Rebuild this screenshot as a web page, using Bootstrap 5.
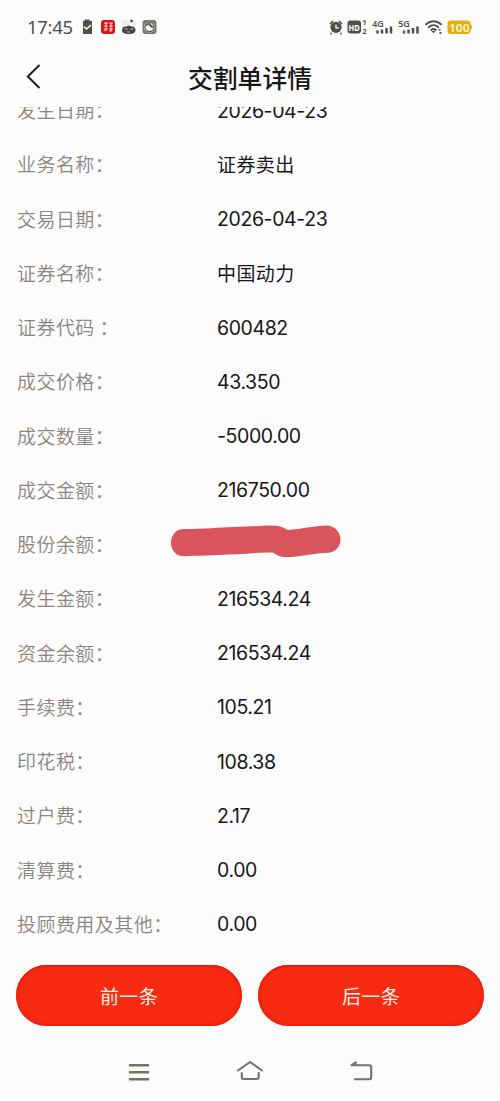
<!DOCTYPE html>
<html lang="zh-CN">
<head>
<meta charset="utf-8">
<meta name="viewport" content="width=device-width, initial-scale=1">
<title>交割单详情</title>
<link rel="stylesheet" href="https://cdn.jsdelivr.net/npm/bootstrap@5.3.0/dist/css/bootstrap.min.css">
<style>
body{background:#fcfcfc;font-family:Inter,"Noto Sans CJK SC",sans-serif;color:#17171a}
.screen{height:1101px}
.status{height:54px;padding:0 28px 0 27px;color:#514e48}
.clock{font:400 18.5px/54px "Noto Sans",sans-serif;letter-spacing:-.3px;width:52px}
.status svg,.navkeys svg,.title-bar svg{display:block}
.title-bar{height:53px}
.title-bar h1{font:500 24.8px/46px "Noto Sans CJK SC",sans-serif}
.back{left:25px;top:9px}
.details{height:845px}
.details dl{margin-top:-23.5px}
.line{height:54.25px;padding-left:17px}
.line dt{width:200px;margin-top:-1px;font:350 19px/30px "Noto Sans CJK SC",sans-serif;letter-spacing:.45px;color:#8a8581;white-space:pre}
.line dd{font-size:19.5px;line-height:30px;letter-spacing:-.4px}
.line dd.han{font-family:"Noto Sans CJK SC",sans-serif;font-size:19px;letter-spacing:.4px;margin-top:-1px}
.scribble{margin-left:-47px;margin-top:-8px}
.actions{padding:13px 16px 0;height:74px;gap:16px}
.btn-pill{height:61px;--bs-btn-color:#fff3e8;--bs-btn-bg:#f62b12;--bs-btn-hover-bg:#e9220c;--bs-btn-hover-color:#fff;border:0;box-shadow:inset 0 0 5px #e8130a,inset 0 1px 1px #d71c10;font:400 19px/61px "Noto Sans CJK SC",sans-serif;letter-spacing:.4px}
.navkeys{height:75px;padding:0 125px}
</style>
</head>
<body>
<main class="screen d-flex flex-column overflow-hidden">
  <header class="status d-flex align-items-center">
    <span class="clock">17:45</span>
    <svg class="ms-1" width="80" height="20" viewBox="83 17 80 20" aria-hidden="true">
      <path d="M82 21h2.500v-1.500h5V21H92v13H82z" fill="#514e48"/><path d="m84 26.500 2.500 2.500 4.500-4" fill="none" stroke="#fff" stroke-width="1.600"/>
      <rect x="101" y="20" width="14" height="14" rx="3" fill="#d9141b"/>
      <path d="M104 23.200h4M106 22v9M104 26h4M104 29h4M109 23h4M109 26h4M109 29h4M111 23v8M109 31h3M104 31l1-1" stroke="#ffe6dc" stroke-width=".9" fill="none"/>
      <rect x="122" y="19.500" width="14" height="14" rx="3" fill="#eeeeed"/><circle cx="131.500" cy="21" r="1.300" fill="#46433c"/>
      <path d="M122 30c0-2 2-4 4.500-3.500 2-1 3-1 5 0 2.500 0 4 1.500 4 3.500 0 3-3 4-6.700 4s-6.800-1-6.800-4z" fill="#46433c"/><path d="M125 29.500l1.500-1 1 1.500m3-.5 1.500-1 1 1.500M127 32h3" stroke="#bdbab2" fill="none"/>
      <rect x="142.500" y="20" width="14" height="14" rx="3" fill="#77746e"/><circle cx="149.500" cy="27" r="5.600" fill="#f4f4f2"/><circle cx="149.500" cy="27" r="4.600" fill="none" stroke="#555149" stroke-width="1.200"/>
      <path d="M146 26c1-2.500 3-2.500 4-.5s2 2 3.500.5M148.500 23l4.500 4.500" fill="none" stroke="#555149" stroke-width="1.200"/>
    </svg>
    <svg class="ms-auto" width="144" height="24" viewBox="328 15 144 24" aria-hidden="true">
      <g fill="none" stroke="#514e48">
        <circle cx="336" cy="27.300" r="5.600" fill="#514e48" stroke="none"/><path d="m330 24 3-3m9 3-3-3m-7.500 12-1 1.200m10-1.200 1 1.200" stroke-width="1.500"/><path d="M336 24.500v3.300h3" stroke="#fff" stroke-width="1.300"/>
        <g stroke-width="2.500"><path d="M377.500 30.500v3M382 29.500v4M386.500 28v5.500M391 26.500v7M404 30.500v3M408.500 29.500v4M413 28v5.500M417.500 26.500v7"/></g>
        <g stroke-width="1.900" stroke-linecap="round"><path d="M426 24.200c4.500-4 10.500-4 15 0M428.700 27.200c3-2.600 6.600-2.600 9.600 0M431.200 30c1.500-1.200 3.200-1.200 4.600 0"/></g>
      </g>
      <path d="m431.500 31 2 2.300 2-2.300zM438.500 29h2v1.500h-2zm1 3h2v1.800h-2z" fill="#514e48"/>
      <rect x="347.500" y="20.500" width="13.500" height="13" rx="3" fill="#514e48"/>
      <g font-family="Noto Sans" font-weight="700" fill="#514e48"><text x="348.600" y="30.500" font-size="9" textLength="11.300" lengthAdjust="spacingAndGlyphs" fill="#fff">HD</text><text x="362.500" y="25.400" font-size="7">1</text><text x="362.500" y="34" font-size="7">2</text><text x="372.300" y="26.600" font-size="9.500" font-weight="600" textLength="11.500" lengthAdjust="spacingAndGlyphs">4G</text><text x="398.300" y="26.600" font-size="9.500" font-weight="600" textLength="11.500" lengthAdjust="spacingAndGlyphs">5G</text></g>
      <path d="M451 20.500h16q3.500 0 3.500 3v1q1.700.3 1.700 2.700t-1.700 2.600v1.200q0 3-3.500 3h-16q-3.500 0-3.500-3v-7.500q0-3 3.500-3z" fill="#e6ae13"/>
      <text x="449" y="31.600" font-family="Noto Sans" font-size="11.500" font-weight="600" fill="#fff6cf" textLength="20.500" lengthAdjust="spacingAndGlyphs">100</text>
    </svg>
  </header>
  <nav class="title-bar position-relative text-center flex-shrink-0">
    <svg class="back position-absolute" width="18" height="28" viewBox="0 0 18 28"><path d="M14.500 2 2.800 13.500 14.500 25" fill="none" stroke="#17171a" stroke-width="1.900"/></svg>
    <h1 class="m-0">交割单详情</h1>
  </nav>
  <section class="details overflow-hidden flex-shrink-0">
    <dl class="mb-0">
      <div class="line d-flex align-items-center"><dt>发生日期：</dt><dd class="mb-0">2026-04-23</dd></div>
      <div class="line d-flex align-items-center"><dt>业务名称：</dt><dd class="mb-0 han">证券卖出</dd></div>
      <div class="line d-flex align-items-center"><dt>交易日期：</dt><dd class="mb-0">2026-04-23</dd></div>
      <div class="line d-flex align-items-center"><dt>证券名称：</dt><dd class="mb-0 han">中国动力</dd></div>
      <div class="line d-flex align-items-center"><dt>证券代码 ：</dt><dd class="mb-0">600482</dd></div>
      <div class="line d-flex align-items-center"><dt>成交价格：</dt><dd class="mb-0">43.350</dd></div>
      <div class="line d-flex align-items-center"><dt>成交数量：</dt><dd class="mb-0">-5000.00</dd></div>
      <div class="line d-flex align-items-center"><dt>成交金额：</dt><dd class="mb-0">216750.00</dd></div>
      <div class="line d-flex align-items-center"><dt>股份余额：</dt><dd class="mb-0"><svg class="scribble d-block" width="172" height="34" viewBox="170 524 172 34"><path d="M184 529C205 529 219 527.500 233 527 250 526.700 261 525.500 272 525.400 279 525.500 284 527 287.500 530 302 529 313 526 326 525.500 335 525.500 340.500 532 340.500 539.500 340.500 547 335 552.500 328 552.700 315 553 300 557 286 557 280 557 276.500 555 273 552.500 260 552 246 554 230 554.500 214 555.500 198 555.500 185 556.300 176 556.500 171 550 171 543 171 535 176 529 184 529Z" fill="#da555b"/></svg></dd></div>
      <div class="line d-flex align-items-center"><dt>发生金额：</dt><dd class="mb-0">216534.24</dd></div>
      <div class="line d-flex align-items-center"><dt>资金余额：</dt><dd class="mb-0">216534.24</dd></div>
      <div class="line d-flex align-items-center"><dt>手续费：</dt><dd class="mb-0">105.21</dd></div>
      <div class="line d-flex align-items-center"><dt>印花税：</dt><dd class="mb-0">108.38</dd></div>
      <div class="line d-flex align-items-center"><dt>过户费：</dt><dd class="mb-0">2.17</dd></div>
      <div class="line d-flex align-items-center"><dt>清算费：</dt><dd class="mb-0">0.00</dd></div>
      <div class="line d-flex align-items-center"><dt>投顾费用及其他：</dt><dd class="mb-0">0.00</dd></div>
    </dl>
  </section>
  <div class="actions d-flex flex-shrink-0">
    <button class="btn btn-pill rounded-pill flex-fill p-0" type="button">前一条</button>
    <button class="btn btn-pill rounded-pill flex-fill p-0" type="button">后一条</button>
  </div>
  <footer class="navkeys d-flex justify-content-between flex-shrink-0">
    <svg width="28" height="75" viewBox="125 1026 28 75"><path d="M130 1065.300h18M130 1072.200h18M130 1079.200h18" stroke="#74706a" stroke-width="2.500" stroke-linecap="round"/></svg>
    <svg width="28" height="75" viewBox="236 1026 28 75"><path d="m238 1070.500 12-8.500 12 8.500M241.800 1073v4q0 2 2.200 2h12.500q2.200 0 2.200-2v-4" fill="none" stroke="#74706a" stroke-width="2.100" stroke-linecap="round" stroke-linejoin="round"/></svg>
    <svg width="28" height="75" viewBox="347 1026 28 75"><path d="M356 1062.500l-4.500 2.700H369q2.200 0 2.200 2V1077q0 2.200-2.200 2.200h-14" fill="none" stroke="#74706a" stroke-width="2.100" stroke-linecap="round" stroke-linejoin="round"/></svg>
  </footer>
</main>
<script src="https://cdn.jsdelivr.net/npm/bootstrap@5.3.0/dist/js/bootstrap.bundle.min.js"></script>
</body>
</html>
